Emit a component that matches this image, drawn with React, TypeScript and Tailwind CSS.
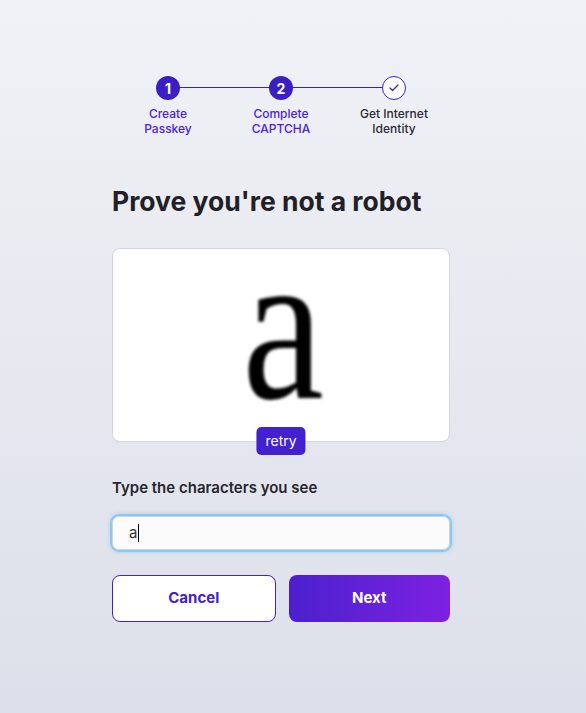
import { Check } from "lucide-react";

const steps = [
  { n: "1", label: ["Create", "Passkey"], done: true },
  { n: "2", label: ["Complete", "CAPTCHA"], done: true },
  { n: "", label: ["Get Internet", "Identity"], done: false },
];

function Stepper() {
  return (
    <div className="relative mx-auto flex w-[338px] justify-between">
      <div className="absolute left-[56px] right-[56px] top-[11px] h-px bg-[#3b1fc5]" />
      {steps.map((s, i) => (
        <div key={i} className="relative z-10 flex w-[112px] flex-col items-center">
          {s.done ? (
            <div className="flex h-[24px] w-[24px] items-center justify-center rounded-full bg-[#3b1fc5] text-[14px] font-bold text-white">
              {s.n}
            </div>
          ) : (
            <div className="flex h-[24px] w-[24px] items-center justify-center rounded-full border border-[#3b1fc5] bg-white text-[#3b1fc5]">
              <Check className="h-3 w-3" strokeWidth={2.5} />
            </div>
          )}
          <div
            className={`mt-[6px] text-center text-[12px] font-medium leading-[15px] ${
              s.done ? "text-[#4a24d4]" : "text-[#2a2a33]"
            }`}
          >
            {s.label[0]}
            <br />
            {s.label[1]}
          </div>
        </div>
      ))}
    </div>
  );
}

export default function App() {
  return (
    <div className="min-h-[713px] w-full bg-gradient-to-b from-[#f1f2f6] to-[#dddfea] pt-[76px] font-['Inter',sans-serif]">
      <div className="w-[562px]">
        <Stepper />

        <div className="mx-auto w-[338px]">
          <h1 className="mt-[48px] text-[26.5px] font-bold leading-[34px] text-[#202026]">
            Prove you're not a robot
          </h1>

          <div className="relative mt-[30px] flex h-[194px] items-center justify-center rounded-[8px] border border-[#d4d5e3] bg-white">
            <span className="mt-[-40px] ml-[4px] inline-block scale-y-[1.18] font-['Liberation_Serif',serif] text-[184px] leading-[0.5] text-black blur-[1.4px]">
              a
            </span>
            <button className="absolute bottom-[-14px] left-1/2 -translate-x-1/2 rounded-[5px] bg-[#4320d0] px-[9px] py-[4px] text-[14px] leading-[20px] text-white">
              retry
            </button>
          </div>

          <label className="mt-[36px] block text-[15px] font-semibold leading-[20px] text-[#26262c]">
            Type the characters you see
          </label>

          <div className="mx-[-2px] mt-[16px] rounded-[9px] border-2 border-[#8ec7ec] shadow-[0_0_4px_#9fd2f0]">
            <div className="flex h-[34px] items-center rounded-[7px] border border-[#cfd1de] bg-[#fbfbfc] pl-[16px] text-[15px] text-[#333]">
              a<span className="ml-px h-[18px] w-px bg-black" />
            </div>
          </div>

          <div className="mt-[23px] flex gap-[13px]">
            <button className="h-[47px] flex-1 rounded-[8px] border border-[#4320d0] bg-white text-[15px] font-bold text-[#4320d0]">
              Cancel
            </button>
            <button className="h-[47px] flex-1 rounded-[8px] bg-gradient-to-r from-[#4a1fce] to-[#7d20e2] text-[15px] font-bold text-white">
              Next
            </button>
          </div>
        </div>
      </div>
    </div>
  );
}
